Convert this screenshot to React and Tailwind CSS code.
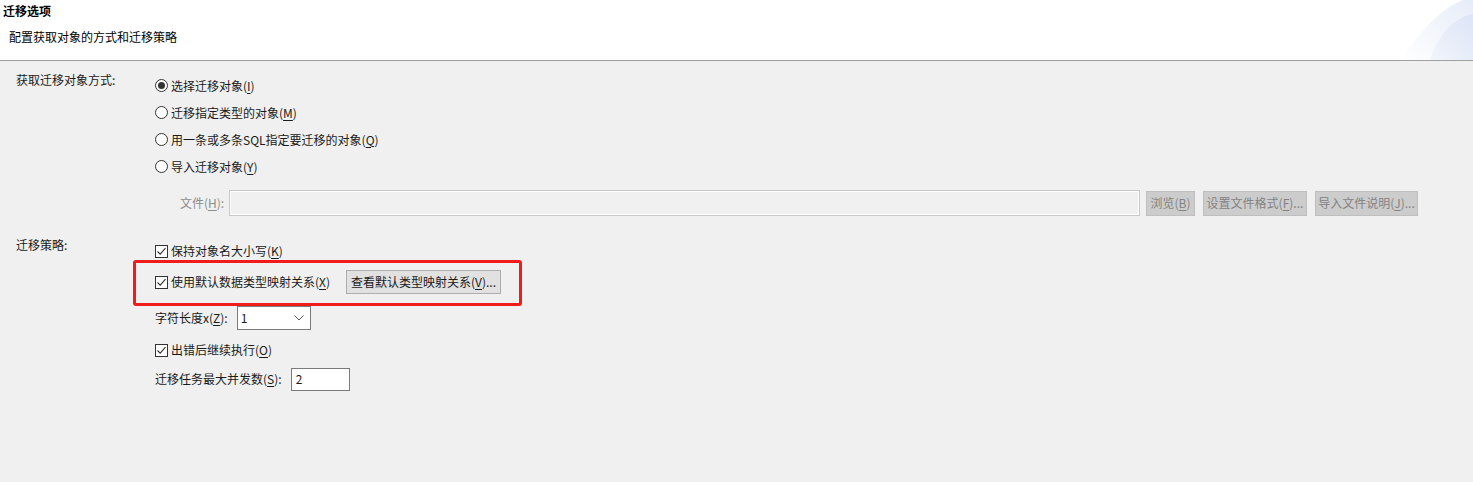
import React from "react";

const U = ({ children }) => (
  <span className="underline underline-offset-[2px] decoration-[1px]">{children}</span>
);

function Radio({ checked, children }) {
  return (
    <div className="flex items-center h-[27px]">
      <span className="w-[13px] h-[13px] rounded-full border border-[#333333] bg-white flex items-center justify-center shrink-0">
        {checked && <span className="w-[7px] h-[7px] rounded-full bg-[#333333]" />}
      </span>
      <span className="ml-[3px] whitespace-nowrap">{children}</span>
    </div>
  );
}

function Check({ children }) {
  return (
    <div className="flex items-center h-[22px]">
      <span className="w-[13px] h-[13px] border border-[#333333] bg-white flex items-center justify-center shrink-0">
        <svg width="11" height="11" viewBox="0 0 11 11">
          <path d="M1.5 5.5 L4.2 8.2 L9.5 2.2" fill="none" stroke="#333333" strokeWidth="1.1" />
        </svg>
      </span>
      <span className="ml-[3px] whitespace-nowrap">{children}</span>
    </div>
  );
}

export default function App() {
  return (
    <div
      className="w-[1473px] h-[482px] bg-[#f0f0f0] text-[12px] text-[#1a1a1a] overflow-hidden"
      style={{ fontFamily: '"Noto Sans CJK SC", "Noto Sans", sans-serif' }}
    >
      {/* Header */}
      <div className="relative h-[61px] bg-white border-b border-[#a0a0a0] overflow-hidden">
        <div className="pl-[3px] pt-[2px] font-bold leading-[18px] text-black">迁移选项</div>
        <div className="pl-[9px] pt-[9px] leading-[16px] text-black">配置获取对象的方式和迁移策略</div>
        <svg
          className="absolute right-0 top-0"
          width="80"
          height="60"
          viewBox="0 0 80 60"
        >
          <defs>
            <linearGradient id="g1" x1="0" y1="1" x2="1" y2="0">
              <stop offset="0" stopColor="#ffffff" />
              <stop offset="1" stopColor="#e6ecf8" />
            </linearGradient>
            <linearGradient id="g2" x1="0" y1="1" x2="1" y2="0">
              <stop offset="0" stopColor="#f2f5fc" />
              <stop offset="1" stopColor="#dce4f6" />
            </linearGradient>
          </defs>
          <path d="M8 60 C25 35 45 10 70 0 L80 0 L80 60 Z" fill="url(#g1)" />
          <path d="M37 60 C45 35 60 18 80 14 L80 60 Z" fill="url(#g2)" />
        </svg>
      </div>

      {/* Section 1 */}
      <div className="flex pl-[16px] pt-[11px]">
        <div className="w-[139px] leading-[16px] shrink-0">获取迁移对象方式:</div>
        <div className="flex-1 pr-[55px]">
          <Radio checked>
            选择迁移对象(<U>I</U>)
          </Radio>
          <Radio>
            迁移指定类型的对象(<U>M</U>)
          </Radio>
          <Radio>
            用一条或多条SQL指定要迁移的对象(<U>Q</U>)
          </Radio>
          <Radio>
            导入迁移对象(<U>Y</U>)
          </Radio>
          <div className="flex items-center mt-[10px] pl-[25px] h-[26px]">
            <span className="text-[#8c8c8c] whitespace-nowrap">
              文件(<U>H</U>):
            </span>
            <div className="ml-[5px] flex-1 h-[26px] border border-[#c8c8c8] bg-[#f0f0f0] shadow-[inset_1px_1px_0_#ffffff,inset_-1px_-1px_0_#ffffff]" />
            <button className="ml-[6px] w-[49px] h-[25px] bg-[#cccccc] border border-[#bfbfbf] text-[#838383] text-[12px] whitespace-nowrap">
              浏览(<U>B</U>)
            </button>
            <button className="ml-[8px] w-[104px] h-[25px] bg-[#cccccc] border border-[#bfbfbf] text-[#838383] text-[12px] whitespace-nowrap">
              设置文件格式(<U>F</U>)...
            </button>
            <button className="ml-[8px] w-[103px] h-[25px] bg-[#cccccc] border border-[#bfbfbf] text-[#838383] text-[12px] whitespace-nowrap">
              导入文件说明(<U>J</U>)...
            </button>
          </div>
        </div>
      </div>

      {/* Section 2 */}
      <div className="flex pl-[16px] mt-[24px]">
        <div className="w-[139px] leading-[16px] shrink-0 mt-[-3px]">迁移策略:</div>
        <div className="flex-1">
          <Check>
            保持对象名大小写(<U>K</U>)
          </Check>
          <div className="relative flex items-center mt-[8px] h-[24px]">
            <Check>
              使用默认数据类型映射关系(<U>X</U>)
            </Check>
            <button className="ml-[16px] w-[155px] h-[24px] bg-[#e1e1e1] border border-[#adadad] text-[12px] text-[#1a1a1a] whitespace-nowrap">
              查看默认类型映射关系(<U>V</U>)...
            </button>
            <div className="absolute left-[-22px] top-[-10px] w-[389px] h-[46px] border-[3px] border-[#f01c1c] rounded-[3px] pointer-events-none" />
          </div>
          <div className="flex items-center mt-[12px] h-[24px]">
            <span className="whitespace-nowrap">
              字符长度x(<U>Z</U>):
            </span>
            <div className="ml-[9px] w-[74px] h-[24px] bg-white border border-[#7a7a7a] flex items-center justify-between pl-[3px] pr-[6px]">
              <span>1</span>
              <svg width="10" height="6" viewBox="0 0 10 6">
                <path d="M0.5 0.5 L5 5 L9.5 0.5" fill="none" stroke="#555" strokeWidth="1" />
              </svg>
            </div>
          </div>
          <div className="mt-[9px]">
            <Check>
              出错后继续执行(<U>O</U>)
            </Check>
          </div>
          <div className="flex items-center mt-[7px] h-[22px]">
            <span className="whitespace-nowrap">
              迁移任务最大并发数(<U>S</U>):
            </span>
            <div className="ml-[9px] w-[59px] h-[23px] bg-white border border-[#7a7a7a] flex items-center pl-[4px]">
              2
            </div>
          </div>
        </div>
      </div>
    </div>
  );
}
